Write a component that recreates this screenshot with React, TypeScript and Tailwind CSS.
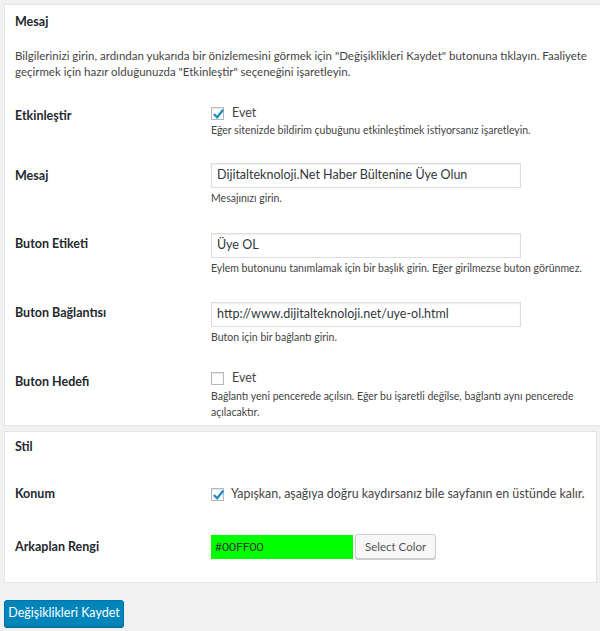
import type { ReactNode } from "react";

const font = { fontFamily: 'Lato, "Noto Sans", sans-serif' };

function Check({ checked }: { checked: boolean }) {
  return (
    <span className="relative inline-flex h-[13px] w-[13px] shrink-0 items-center justify-center border border-[#b4b9be] bg-white shadow-[inset_0_1px_2px_rgba(0,0,0,0.1)]">
      {checked && (
        <svg viewBox="0 0 16 16" className="absolute -left-[1px] -top-[2px] h-[15px] w-[15px]">
          <path d="M3 8.5 L6.5 12 L13 4" fill="none" stroke="#1e8cbe" strokeWidth="2.4" />
        </svg>
      )}
    </span>
  );
}

function Row({
  label,
  labelTop,
  top,
  children,
}: {
  label: string;
  labelTop: string;
  top: string;
  children: ReactNode;
}) {
  return (
    <div className={`flex items-start ${top}`}>
      <div className={`w-[196px] shrink-0 text-[12.5px] font-bold leading-[18px] text-[#23282d] ${labelTop}`}>
        {label}
      </div>
      <div className="min-w-0 flex-1">{children}</div>
    </div>
  );
}

function Desc({ children, top = "mt-[2px]" }: { children: ReactNode; top?: string }) {
  return <p className={`${top} pr-4 text-[10.5px] leading-[16px] text-[#444]`}>{children}</p>;
}

function TextInput({ value }: { value: string }) {
  return (
    <div className="flex h-[25px] w-[310px] items-center border border-[#ddd] bg-white px-[5px] text-[12.5px] text-[#32373c] shadow-[inset_0_1px_2px_rgba(0,0,0,0.07)]">
      {value}
    </div>
  );
}

export default function App() {
  return (
    <div className="min-h-[631px] bg-[#f1f1f1] pl-[4px] pt-[4px]" style={font}>
      <section className="border border-r-0 border-[#e5e5e5] bg-white pb-[5px] pl-[10px] pt-[8px]">
        <h2 className="text-[12.5px] font-bold leading-[18px] text-[#23282d]">Mesaj</h2>
        <p className="mt-[17px] pr-[4px] text-[11.5px] leading-[16px] text-[#444]">
          Bilgilerinizi girin, ardından yukarıda bir önizlemesini görmek için "Değişiklikleri Kaydet" butonuna tıklayın. Faaliyete geçirmek için hazır olduğunuzda "Etkinleştir" seçeneğini işaretleyin.
        </p>

        <Row label="Etkinleştir" labelTop="mt-[2px]" top="mt-[25px]">
          <label className="flex h-[16px] items-center gap-[8px] text-[12.5px] text-[#444]">
            <Check checked />
            Evet
          </label>
          <Desc top="mt-[1px]">Eğer sitenizde bildirim çubuğunu etkinleştimek istiyorsanız işaretleyin.</Desc>
        </Row>

        <Row label="Mesaj" labelTop="mt-[4px]" top="mt-[25px]">
          <TextInput value="Dijitalteknoloji.Net Haber Bültenine Üye Olun" />
          <Desc>Mesajınızı girin.</Desc>
        </Row>

        <Row label="Buton Etiketi" labelTop="mt-[2px]" top="mt-[27px]">
          <TextInput value="Üye OL" />
          <Desc>Eylem butonunu tanımlamak için bir başlık girin. Eğer girilmezse buton görünmez.</Desc>
        </Row>

        <Row label="Buton Bağlantısı" labelTop="mt-[2px]" top="mt-[26px]">
          <TextInput value="http://www.dijitalteknoloji.net/uye-ol.html" />
          <Desc>Buton için bir bağlantı girin.</Desc>
        </Row>

        <Row label="Buton Hedefi" labelTop="mt-[3px]" top="mt-[25px]">
          <label className="flex h-[16px] items-center gap-[8px] text-[12.5px] text-[#444]">
            <Check checked={false} />
            Evet
          </label>
          <Desc top="mt-[2px]">
            Bağlantı yeni pencerede açılsın. Eğer bu işaretli değilse, bağlantı aynı pencerede açılacaktır.
          </Desc>
        </Row>
      </section>

      <section className="mr-[3px] mt-[5px] border border-[#e5e5e5] bg-white pb-[23px] pl-[10px] pt-[6px]">
        <h2 className="text-[12.5px] font-bold leading-[18px] text-[#23282d]">Stil</h2>

        <Row label="Konum" labelTop="mt-[-1px]" top="mt-[30px]">
          <label className="flex h-[16px] items-center gap-[7px] whitespace-nowrap text-[12.4px] text-[#444]">
            <Check checked />
            Yapışkan, aşağıya doğru kaydırsanız bile sayfanın en üstünde kalır.
          </label>
        </Row>

        <Row label="Arkaplan Rengi" labelTop="mt-[4px]" top="mt-[31px]">
          <div className="flex items-center gap-[2px]">
            <div className="flex h-[24px] w-[142px] items-center bg-[#00ff00] px-[4px] text-[12px] text-[#333]">
              #00FF00
            </div>
            <button className="h-[25px] rounded-[3px] border border-[#ccc] bg-[#f7f7f7] px-[9px] text-[11.5px] text-[#555] shadow-[0_1px_0_#ccc]">
              Select Color
            </button>
          </div>
        </Row>
      </section>

      <button className="mt-[17px] h-[27px] w-[120px] rounded-[3px] border border-[#0073aa] bg-[#0085ba] text-[12.5px] text-white shadow-[0_1px_0_#006799]">
        Değişiklikleri Kaydet
      </button>
    </div>
  );
}
